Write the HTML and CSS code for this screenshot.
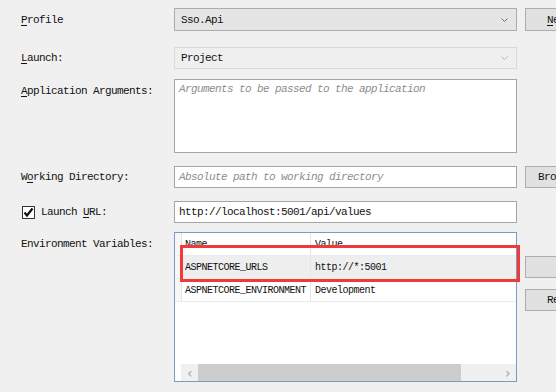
FILE: index.html
```html
<!DOCTYPE html>
<html lang="en">
<head>
  <meta charset="UTF-8" />
  <title>Debug Profile</title>
  <link rel="stylesheet" href="styles.css">
</head>
<body>

  <div class="form">
    <div class="row row-profile">
      <label class="label"><u>P</u>rofile</label>
      <div class="select">
        <span>Sso.Api</span>
        <svg class="chevron" width="7" height="4" viewBox="0 0 7 4"><path d="M0.5 0.5 L3.5 3.5 L6.5 0.5" fill="none" stroke="#6d6d6d" stroke-width="1"/></svg>
      </div>
      <button class="button"><u>N</u>ew...</button>
    </div>

    <div class="row row-launch">
      <label class="label"><u>L</u>aunch:</label>
      <div class="select disabled">
        <span>Project</span>
        <svg class="chevron" width="7" height="4" viewBox="0 0 7 4"><path d="M0.5 0.5 L3.5 3.5 L6.5 0.5" fill="none" stroke="#b5b5b5" stroke-width="1"/></svg>
      </div>
    </div>

    <div class="row row-args">
      <label class="label top"><u>A</u>pplication Arguments:</label>
      <div class="textarea"><span class="placeholder">Arguments to be passed to the application</span></div>
    </div>

    <div class="row row-dir">
      <label class="label">W<u>o</u>rking Directory:</label>
      <div class="input"><span class="placeholder">Absolute path to working directory</span></div>
      <button class="button">Browse...</button>
    </div>

    <div class="row row-url">
      <label class="label check-label">
        <span class="checkbox">
          <svg width="11" height="11" viewBox="0 0 11 11"><path d="M1.5 5.5 L4 8.5 L9.5 1.5" fill="none" stroke="#111" stroke-width="2.2"/></svg>
        </span>
        <span>Launch <u>U</u>RL:</span>
      </label>
      <div class="input">http://localhost:5001/api/values</div>
    </div>

    <div class="row row-env">
      <label class="label top">Environment Variables:</label>
      <div class="env-wrap">
        <div class="env-grid">
          <div class="grid-row header">
            <span class="gutter"></span>
            <span class="cell">Name</span>
            <span class="cell sep">Value</span>
          </div>
          <div class="grid-row selected">
            <span class="gutter"></span>
            <span class="cell">ASPNETCORE_URLS</span>
            <span class="cell sep">http://*:5001</span>
          </div>
          <div class="grid-row">
            <span class="gutter"></span>
            <span class="cell">ASPNETCORE_ENVIRONMENT</span>
            <span class="cell sep">Development</span>
          </div>
          <div class="scrollbar">
            <span class="arrow">&#8249;</span>
            <span class="thumb"></span>
            <span class="track"></span>
            <span class="arrow">&#8250;</span>
          </div>
        </div>
        <div class="highlight"></div>
      </div>
      <div class="side-buttons">
        <button class="button add">Add</button>
        <button class="button">Remove</button>
      </div>
    </div>
  </div>

</body>
</html>
```

FILE: styles.css
```css
* {
  box-sizing: border-box;
}
html, body {
  overflow: hidden;
}
body {
  margin: 0;
  background-color: #f0f0f0;
  font-family: 'Liberation Mono', 'DejaVu Sans Mono', monospace;
  font-size: 11px;
  letter-spacing: -0.6px;
  color: #111;
  width: 556px;
  height: 392px;
}
u {
  text-decoration-thickness: 1px;
  text-underline-offset: 2px;
}
.form {
  padding: 8px 0 0 21px;
  width: 620px;
}
.row {
  display: grid;
  grid-template-columns: 145px 343px 80px;
  column-gap: 8px;
  align-items: center;
}
.row-profile { height: 23px; }
.row-launch { height: 22px; margin-top: 16px; }
.row-args { margin-top: 10px; align-items: start; }
.row-dir { height: 22px; margin-top: 13px; }
.row-url { height: 22px; margin-top: 13px; }
.row-env { margin-top: 9px; align-items: start; }

.label {
  white-space: nowrap;
  line-height: 14px;
}
.label.top {
  line-height: 22px;
  padding-top: 1px;
}

.select {
  height: 100%;
  display: flex;
  align-items: center;
  justify-content: space-between;
  padding: 0 6px 0 6px;
  background-color: #e5e5e5;
  border: 1px solid #acacac;
}
.select.disabled {
  background-color: #efefef;
  border-color: #d9d9d9;
}
.chevron {
  margin-right: 2px;
}

.input,
.textarea {
  background: #fff;
  border: 1px solid #a5a5a5;
  padding: 0 4px;
}
.input {
  height: 100%;
  display: flex;
  align-items: center;
}
.textarea {
  height: 74px;
  padding-top: 3px;
}
.placeholder {
  color: #8d8d8d;
  font-style: italic;
}

.button {
  font-family: inherit;
  font-size: 11px;
  letter-spacing: -0.6px;
  color: #111;
  width: 80px;
  height: 23px;
  padding: 0;
  background: #e1e1e1;
  border: 1px solid #adadad;
  text-align: center;
}
.row-dir .button { height: 22px; }

.check-label {
  display: flex;
  align-items: center;
  gap: 6px;
  margin-left: 1px;
}
.checkbox {
  width: 13px;
  height: 13px;
  border: 1px solid #333;
  background: #fff;
  display: flex;
  align-items: center;
  justify-content: center;
}

.env-wrap {
  position: relative;
}
.env-grid {
  height: 150px;
  background: #fff;
  border: 1px solid #7b9bc4;
  display: flex;
  flex-direction: column;
  font-size: 10px;
  letter-spacing: -0.5px;
}
.grid-row {
  display: grid;
  grid-template-columns: 7px 128px 1fr;
  height: 23px;
  border-bottom: 1px solid #ebebeb;
}
.grid-row.selected {
  background: #eeeeee;
}
.gutter {
  background: #f7f7f7;
  border-right: 1px solid #e3e3e3;
}
.cell {
  display: flex;
  align-items: center;
  padding-left: 3px;
  overflow: hidden;
  white-space: nowrap;
}
.cell.sep {
  border-left: 1px solid #e6e6e6;
  padding-left: 4px;
}
.header .cell {
  padding-top: 1px;
}

.scrollbar {
  margin-top: auto;
  margin-left: 6px;
  height: 17px;
  display: flex;
  background: #f0f0f0;
}
.arrow {
  width: 17px;
  display: flex;
  align-items: center;
  justify-content: center;
  color: #a3a3a3;
  font-family: 'DejaVu Sans', sans-serif;
  font-size: 14px;
}
.thumb {
  width: 263px;
  background: #cdcdcd;
}
.track {
  flex: 1;
}

.highlight {
  position: absolute;
  left: 6px;
  top: 13px;
  width: 340px;
  height: 37px;
  border: 3px solid #f03a3a;
}

.side-buttons {
  display: flex;
  flex-direction: column;
  gap: 11px;
  padding-top: 24px;
}
.side-buttons .button {
  height: 22px;
}
.side-buttons .add {
  padding-left: 8px;
}
```
